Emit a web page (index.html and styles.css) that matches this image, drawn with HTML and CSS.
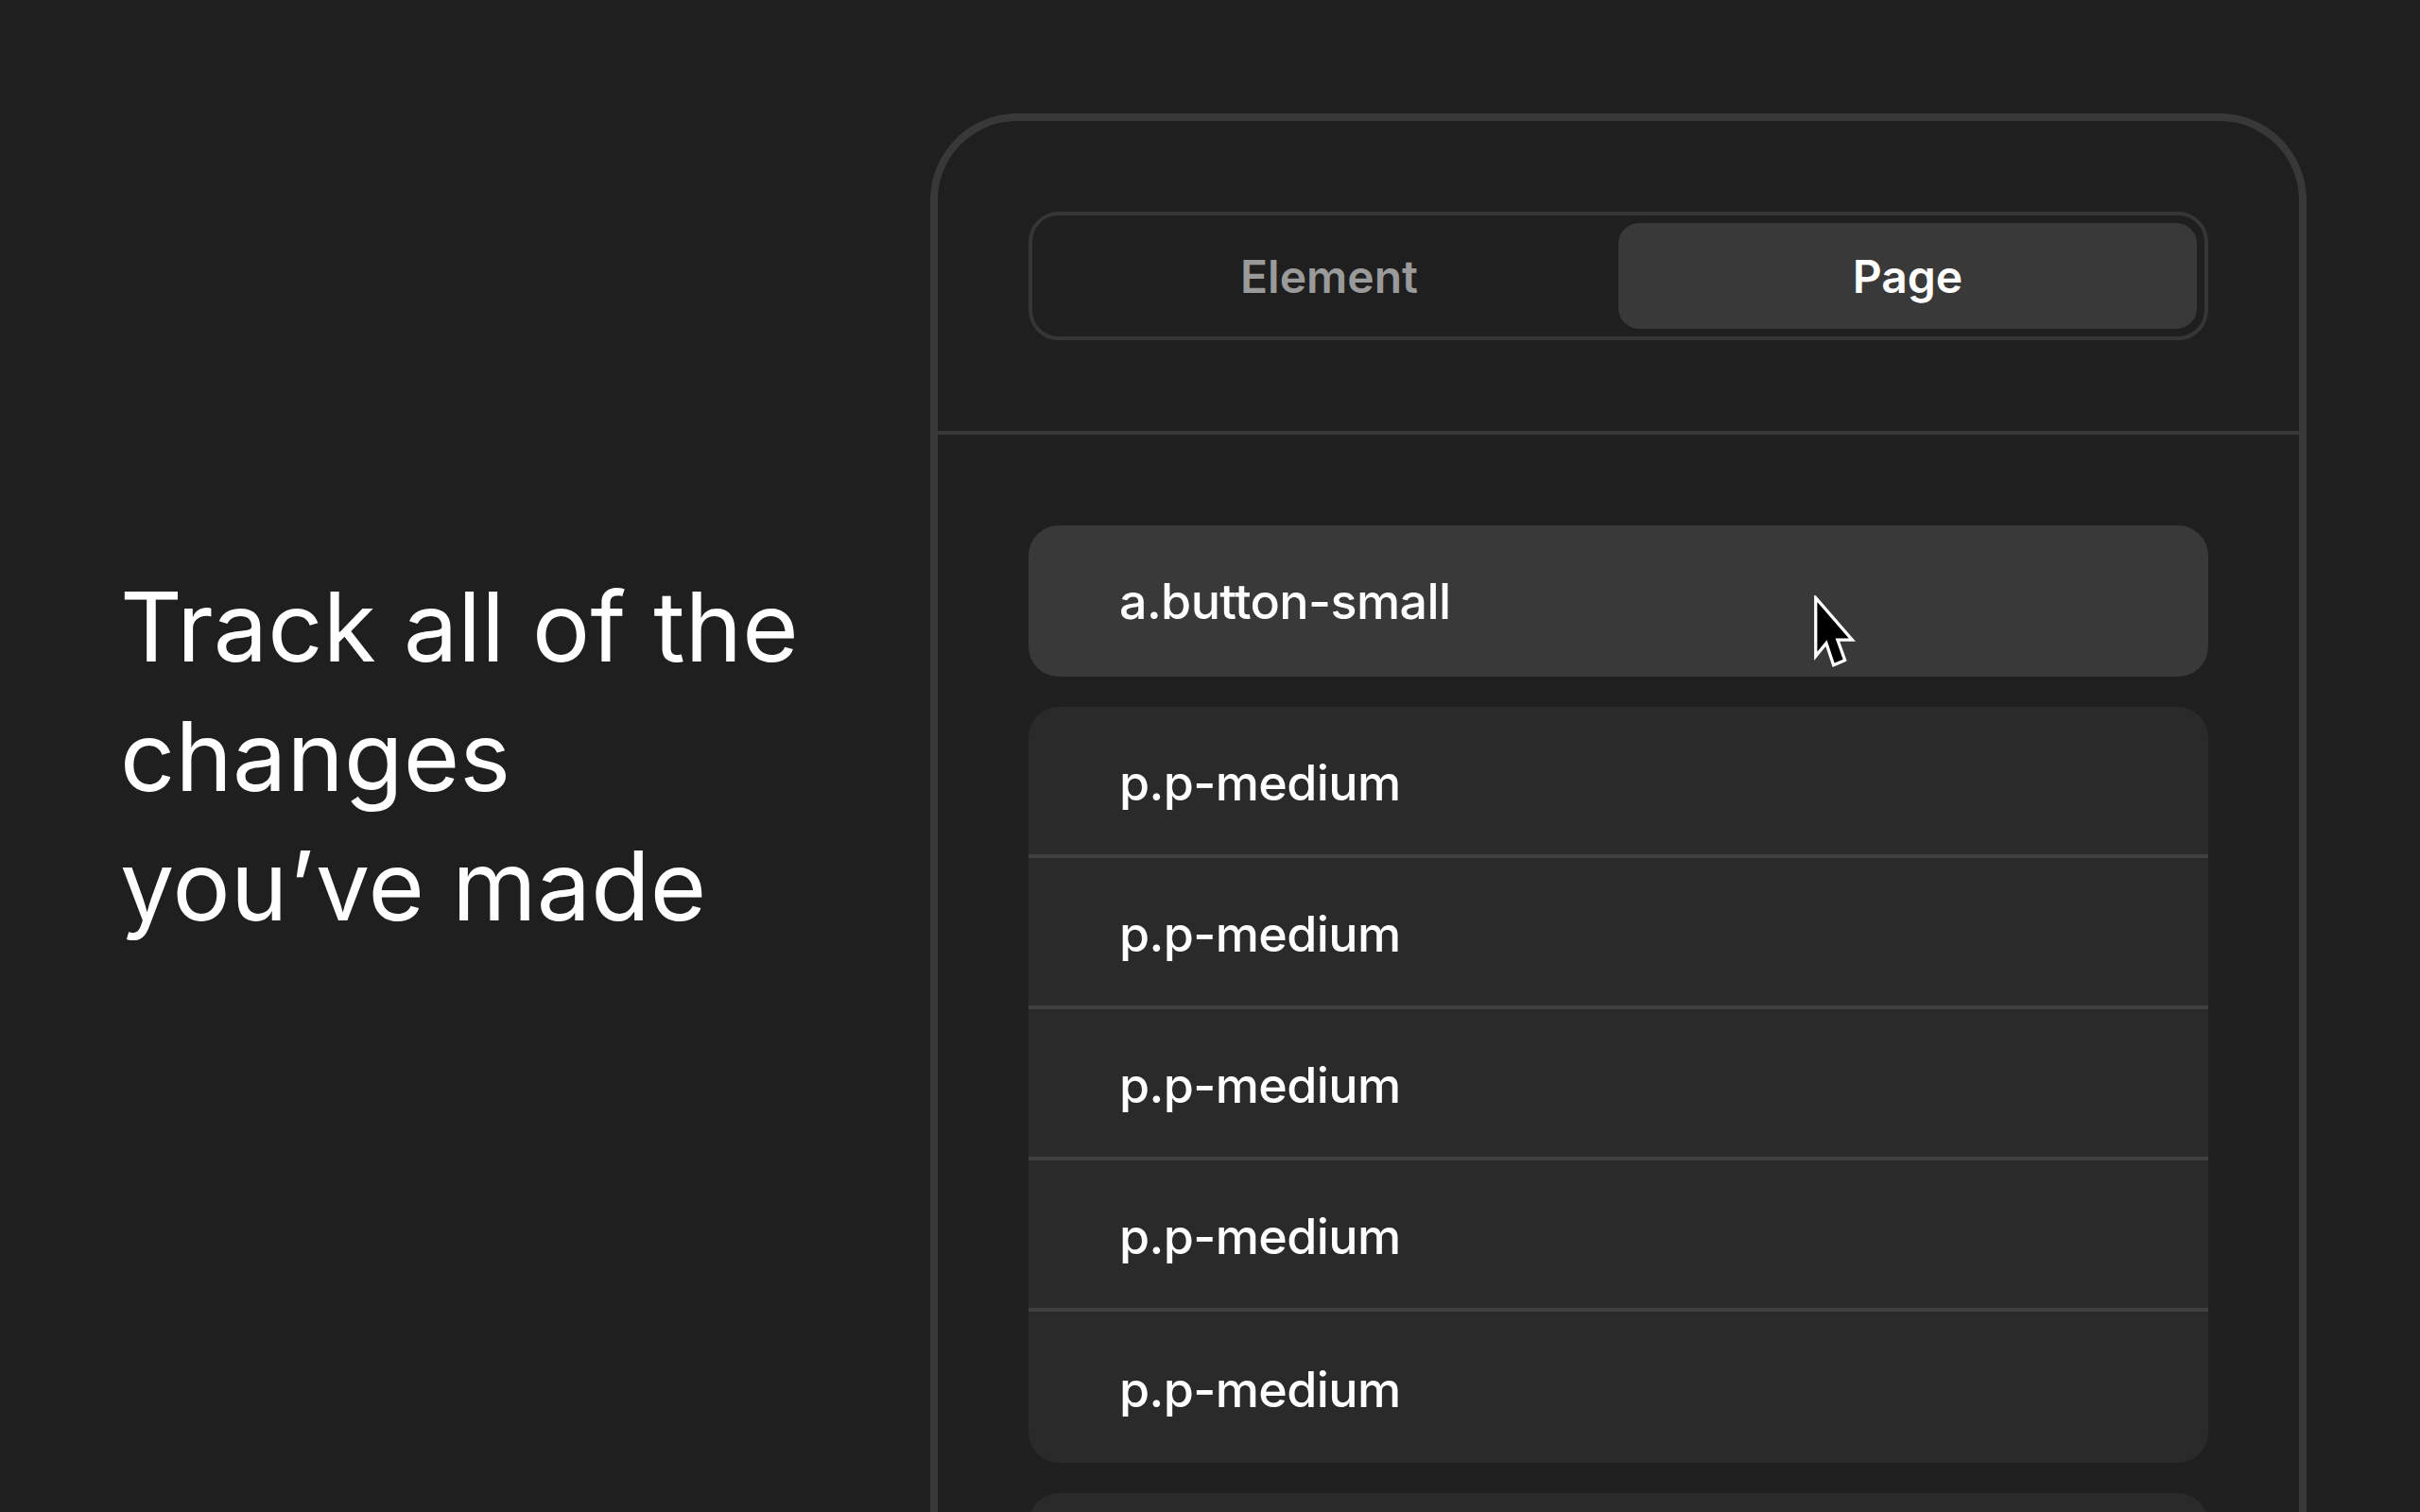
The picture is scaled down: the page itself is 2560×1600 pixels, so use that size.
FILE: index.html
```html
<!DOCTYPE html>
<html lang="en">

<head>
  <meta charset="UTF-8" />
  <meta name="viewport" content="width=device-width, initial-scale=1.0" />
  <title>Changes</title>
  <link rel="stylesheet" href="styles.css">
</head>

<body>
  <div class="page">
    <div class="intro">
      <h1>Track all of the<br>changes<br>you’ve made</h1>
    </div>

    <div class="panel">
      <div class="panel-head">
        <div class="tabs">
          <div class="tab">Element</div>
          <div class="tab active">Page</div>
        </div>
      </div>

      <div class="panel-body">
        <div class="item selected">
          <span>a.button-small</span>
          <svg class="cursor" width="45" height="79" viewBox="0 0 52 92">
            <path d="M3 3 V75 L16 59 L25 86 L39 80 L30 55 H48 Z" fill="#000" stroke="#fff" stroke-width="3.8" stroke-linejoin="miter" />
          </svg>
        </div>

        <div class="group">
          <div class="row">p.p-medium</div>
          <div class="row">p.p-medium</div>
          <div class="row">p.p-medium</div>
          <div class="row">p.p-medium</div>
          <div class="row">p.p-medium</div>
        </div>

        <!-- next group, only its top edge is in view -->
        <div class="group peek"></div>
      </div>
    </div>
  </div>
</body>

</html>
```

FILE: styles.css
```css
/* General Styles */
body {
  margin: 0;
  padding: 0;
  background: #1f1f1f;
  color: #fff;
  font-family: Inter, "Noto Sans", sans-serif;
}

.page {
  display: flex;
  height: 100vh;
  overflow: hidden;
  padding-left: 127px;
  box-sizing: border-box;
}

/* Heading */
.intro {
  flex: 0 0 857px;
  align-self: center;
}

.intro h1 {
  margin: 0;
  font-size: 102px;
  font-weight: 400;
  line-height: 137px;
  letter-spacing: 0.2px;
}

/* Panel */
.panel {
  flex: 0 0 1456px;
  box-sizing: border-box;
  margin-top: 120px;
  border: 8px solid #383838;
  border-bottom: none;
  border-radius: 92px 92px 0 0;
}

.panel-head {
  padding: 96px;
  border-bottom: 4px solid #383838;
}

.tabs {
  display: grid;
  grid-template-columns: 1fr 1fr;
  padding: 8px;
  border: 4px solid #363636;
  border-radius: 32px;
}

.tab {
  height: 112px;
  display: flex;
  align-items: center;
  justify-content: center;
  border-radius: 22px;
  font-size: 48px;
  font-weight: 600;
  color: #9a9a9a;
}

.tab.active {
  background: #393939;
  color: #fff;
}

/* List */
.panel-body {
  display: flex;
  flex-direction: column;
  gap: 32px;
  padding: 96px;
}

.item,
.row {
  display: flex;
  align-items: center;
  padding-left: 96px;
  font-size: 52px;
  font-weight: 500;
  letter-spacing: -0.6px;
}

.item.selected {
  position: relative;
  height: 160px;
  background: #393939;
  border-radius: 32px;
}

.cursor {
  position: absolute;
  left: 830px;
  top: 74px;
}

.group {
  background: #2a2a2a;
  border-radius: 32px;
  overflow: hidden;
}

.row {
  height: 160px;
  box-sizing: border-box;
  padding-top: 4px;
}

.row:not(:last-child) {
  border-bottom: 4px solid #404040;
}

.group.peek {
  height: 160px;
  flex-shrink: 0;
}
```
